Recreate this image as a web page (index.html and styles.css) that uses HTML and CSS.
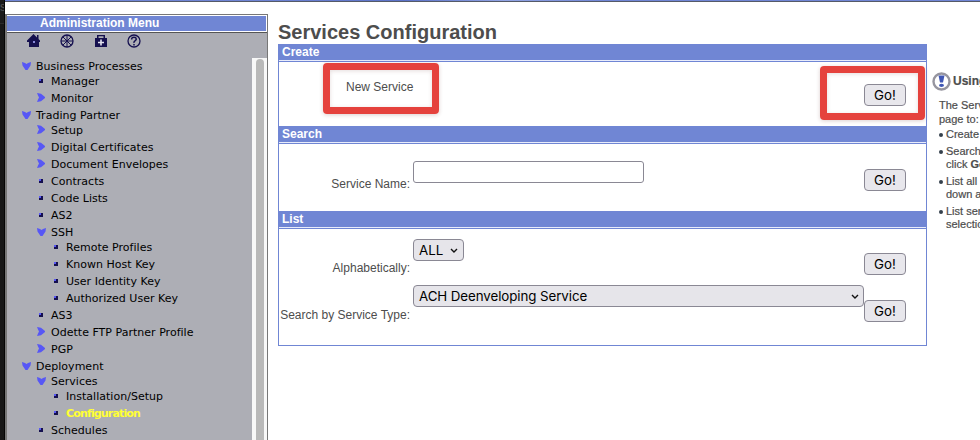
FILE: index.html
```html
<!DOCTYPE html>
<html lang="en">
<head>
<meta charset="utf-8">
<title>Services Configuration</title>
<link rel="stylesheet" href="styles.css">
</head>
<body>
<svg class="defs" width="0" height="0">
  <symbol id="down" viewBox="0 0 9 8"><path d="M0 0L3 1 4.500 2 6 1 9 0 8.500 3.500 5.500 8H3.500L.5 3.500z" fill="#5757f5"/></symbol>
  <symbol id="right" viewBox="0 0 8 9"><path d="M0 0L4 .8 8 4V5L4 8.200 0 9 1 6.500 2 4.500 1 2.500z" fill="#5757f5"/></symbol>
  <symbol id="dot" viewBox="0 0 4 4"><path d="M0 0h4v4H0z" fill="#15104f"/><path d="M0 0h2v2H0z" fill="#5757f5"/></symbol>
  <symbol id="chev" viewBox="0 0 8 5"><path d="M1 1l3 3 3-3" fill="none" stroke="#111" stroke-width="1.4"/></symbol>
</svg>
<div class="edge">s</div>
<div class="page">
  <div class="topbar"></div>
  <div class="content">
    <nav class="sidebar">
      <div class="menu-title">Administration Menu</div>
      <div class="menu-body">
        <div class="tools">
          <svg width="14" height="14" viewBox="0 0 14 14"><path d="M6.500 0L13 6.500V8h-1v5H2V8H0V6.500z" fill="#15104f"/><path d="M10 1h1.500v4H10z" fill="#15104f"/><path d="M6 7h2v2H6z" fill="#8888d8"/></svg>
          <svg width="14" height="14" viewBox="0 0 14 14" fill="none" stroke="#15104f"><circle cx="7" cy="7" r="6" stroke-width="1.3"/><path d="M7 1v12M1 7h12M3 3l8 8M11 3l-8 8"/></svg>
          <svg width="14" height="14" viewBox="0 0 14 14"><path d="M1 4h2V1h8v3h2v9H1zM4.500 2.300V4h5V2.300z" fill="#15104f" fill-rule="evenodd"/><path d="M6.200 5.500h1.600v2.200H10v1.600H7.800v2.200H6.200V9.300H4V7.700h2.200z" fill="#e4e4f0"/></svg>
          <svg width="14" height="14" viewBox="0 0 14 14" fill="none" stroke="#15104f"><circle cx="7" cy="7" r="6" stroke-width="1.3"/><path d="M4.700 5.500V4.700Q5 3.200 7 3.200T9.300 5Q9.300 6 8 6.800T7 9M7 10v1.500" stroke-width="1.500"/></svg>
        </div>
        <div class="tree-wrap">
          <div class="tree">
            <div class="row open"><svg><use href="#down"/></svg>Business Processes</div>
            <div class="row l2 leaf"><svg><use href="#dot"/></svg>Manager</div>
            <div class="row l2 shut"><svg><use href="#right"/></svg>Monitor</div>
            <div class="row open"><svg><use href="#down"/></svg>Trading Partner</div>
            <div class="row l2 shut"><svg><use href="#right"/></svg>Setup</div>
            <div class="row l2 shut"><svg><use href="#right"/></svg>Digital Certificates</div>
            <div class="row l2 shut"><svg><use href="#right"/></svg>Document Envelopes</div>
            <div class="row l2 leaf"><svg><use href="#dot"/></svg>Contracts</div>
            <div class="row l2 leaf"><svg><use href="#dot"/></svg>Code Lists</div>
            <div class="row l2 leaf"><svg><use href="#dot"/></svg>AS2</div>
            <div class="row l2 open"><svg><use href="#down"/></svg>SSH</div>
            <div class="row l3 leaf"><svg><use href="#dot"/></svg>Remote Profiles</div>
            <div class="row l3 leaf"><svg><use href="#dot"/></svg>Known Host Key</div>
            <div class="row l3 leaf"><svg><use href="#dot"/></svg>User Identity Key</div>
            <div class="row l3 leaf"><svg><use href="#dot"/></svg>Authorized User Key</div>
            <div class="row l2 leaf"><svg><use href="#dot"/></svg>AS3</div>
            <div class="row l2 shut"><svg><use href="#right"/></svg>Odette FTP Partner Profile</div>
            <div class="row l2 shut"><svg><use href="#right"/></svg>PGP</div>
            <div class="row open"><svg><use href="#down"/></svg>Deployment</div>
            <div class="row l2 open"><svg><use href="#down"/></svg>Services</div>
            <div class="row l3 leaf"><svg><use href="#dot"/></svg>Installation/Setup</div>
            <div class="row l3 leaf current"><svg><use href="#dot"/></svg>Configuration</div>
            <div class="row l2 leaf"><svg><use href="#dot"/></svg>Schedules</div>
          </div>
          <div class="track"><div class="thumb"></div></div>
        </div>
      </div>
    </nav>
    <main class="main">
      <h1>Services Configuration</h1>
      <div class="panel">
        <h2>Create</h2>
        <div class="section create">
          <div class="mark mark-label">New Service</div>
          <div class="mark mark-go"><button>Go!</button></div>
        </div>
        <h2>Search</h2>
        <div class="section search">
          <label for="name">Service Name:</label>
          <input id="name" type="text">
          <button>Go!</button>
        </div>
        <h2>List</h2>
        <div class="section list">
          <div class="line">
            <span class="label">Alphabetically:</span>
            <div class="select short">ALL<svg width="8" height="5"><use href="#chev"/></svg></div>
            <button>Go!</button>
          </div>
          <div class="line">
            <span class="label">Search by Service Type:</span>
            <div class="select long">ACH Deenveloping Service<svg width="8" height="5"><use href="#chev"/></svg></div>
            <button>Go!</button>
          </div>
        </div>
      </div>
    </main>
    <aside class="help">
      <div class="help-head">
        <svg width="19" height="19" viewBox="0 0 19 19"><circle cx="9.500" cy="9.500" r="8" fill="#fff" stroke="#96959f" stroke-width="2.4"/><path d="M6.500 3.500h6l-1.500 7H8z" fill="#4057b5"/><ellipse cx="9.500" cy="13.300" rx="2.500" ry="1.600" fill="#4057b5"/></svg>
        <b>Using</b>
      </div>
      <p>The Serv<br>page to:</p>
      <ul>
        <li>Create</li>
        <li>Search<br>click <b>Go</b></li>
        <li>List all<br>down a</li>
        <li>List ser<br>selectio</li>
      </ul>
    </aside>
  </div>
</div>
</body>
</html>
```
FILE: styles.css
```css
* { box-sizing: border-box; }
body {
  margin: 0;
  display: flex;
  width: 980px;
  height: 440px;
  overflow: hidden;
  background: #fff;
  font: 12px/14px "Liberation Sans", Arial, sans-serif;
  color: #4d4d4d;
}
.defs { position: absolute; }
.edge {
  width: 5px;
  flex: none;
  background: linear-gradient(#1b1b1b 23px, #2b2b2b 23px, #2b2b2b 24px, #171717 24px);
  border-right: 1px solid #050505;
  color: #555;
  overflow: hidden;
}
.page { flex: 1; min-width: 0; }
.topbar {
  height: 2px;
  background: linear-gradient(90deg, #7086d6 0 40px, #6e84d4 250px, #5b72c8 400px, #91a4e4 500px, #7086d6 600px);
  border-bottom: 1px solid #555a68;
}
.content { display: flex; height: 438px; }

.sidebar {
  width: 263px;
  flex: none;
  margin-top: 12px;
  border: solid #777;
  border-width: 1px 1px 0 2px;
  display: flex;
  flex-direction: column;
}
.menu-title {
  height: 17px;
  flex: none;
  border: solid #fff;
  border-width: 1px 1px 1px 0;
  background: #7086d4;
  padding-left: 33px;
  font-weight: bold;
  font-size: 12px;
  line-height: 14px;
  color: #fff;
}
.menu-body {
  flex: 1;
  min-height: 0;
  border-top: 1px solid #555;
  background: #adaeb5;
}
.tools { display: flex; gap: 19.6px; height: 25px; padding: 1px 0 0 19.5px; }
.tree-wrap { display: flex; height: 383px; }
.tree {
  flex: 1;
  overflow: hidden;
  font: 11px/14px "DejaVu Sans", Verdana, sans-serif;
  letter-spacing: 0.02px;
  color: #000;
  padding: 2px 0 0 15px;
}
.row { display: flex; height: 17px; white-space: nowrap; }
.row.open { height: 15px; }
.row svg { flex: none; width: 9px; height: 8px; margin: 2px 5px 0 0; }
.row.shut svg { width: 8px; height: 9px; margin: 1px 6px 0 0; }
.row.leaf svg { width: 4px; height: 4px; margin: 4px 8px 0 2px; }
.l2 { padding-left: 15px; }
.l3 { padding-left: 30px; }
.row.current { color: #ffff33; font-weight: bold; letter-spacing: -0.84px; }
.track { width: 15px; background: #f8f8f8; padding: 1px 3px 0 4px; }
.thumb { height: 400px; background: #b9b9b9; border-radius: 4px; }

.main { width: 649px; flex: none; margin-left: 10px; padding-top: 20px; }
h1 { margin: 0; height: 22px; font-size: 20px; line-height: 21px; }
.panel { height: 302px; border: 1px solid #7086d4; border-top: 0; }
h2 {
  margin: 0;
  height: 18px;
  border-bottom: 1px solid #7086d4;
  background: linear-gradient(#7086d4 16px, #e8ecfb 16px);
  padding-left: 3px;
  font-size: 12px;
  line-height: 16px;
  color: #fff;
}
.section { display: flex; align-items: flex-start; }
.create { height: 64px; padding-left: 44px; }
.mark {
  border: 7px solid #e5423d;
  border-radius: 4px;
  box-shadow: 0 1px 4px rgba(80, 20, 20, .2), inset 0 1px 4px rgba(80, 20, 20, .15);
}
.mark-label { width: 116px; height: 51px; margin-top: 1px; padding: 10px 0 0 16px; }
.mark-go { width: 105px; height: 54px; margin: 4px 0 0 381px; padding: 11px 0 0 37px; }
button {
  display: block;
  flex: none;
  width: 42px;
  height: 22px;
  margin: 0;
  padding: 0;
  border: 1px solid #8a8894;
  border-radius: 4px;
  background: #e8e7ec;
  font: 13.33px/20px Inter, sans-serif;
  color: #000;
}
.search { height: 67px; }
.search label, .label { width: 131px; flex: none; text-align: right; white-space: nowrap; }
.search label { margin-top: 33px; }
.search input {
  width: 231px;
  height: 22px;
  margin: 17px 220px 0 3px;
  border: 1px solid #8a8894;
  border-radius: 3px;
  background: #fff;
}
.search button { margin-top: 25px; }
.list { flex-direction: column; padding-top: 10px; }
.line { display: flex; height: 46px; width: 100%; }
.label { margin: 22px 3px 0 0; }
.select {
  display: flex;
  align-items: center;
  justify-content: space-between;
  height: 22px;
  padding: 0 5px;
  border: 1px solid #8a8894;
  border-radius: 4px;
  background: #e6e5ea;
  font: 13.33px/20px Inter, sans-serif;
  color: #000;
}
.short { width: 51px; margin-right: 400px; }
.long { width: 451px; padding-right: 4px; letter-spacing: -0.08px; }
.line button { margin-top: 14px; }
.line + .line button { margin-top: 15px; }
.line + .line .label { margin-top: 23px; }

.help { width: 53px; flex: none; padding: 70px 0 0 5px; font-size: 11px; line-height: 13px; white-space: nowrap; overflow: hidden; -webkit-text-stroke: 0.2px #4d4d4d; }
.help-head { display: flex; align-items: center; gap: 2px; height: 19px; font-size: 12px; }
.help-head svg { flex: none; }
.help p { margin: 7px 0 0 7px; line-height: 14px; }
.help ul { list-style: none; margin: 2px 0 0; padding: 0 0 0 14px; }
.help li { margin-bottom: 4px; }
.help li::before { content: ""; float: left; width: 4px; height: 4px; margin: 5px 0 0 -7px; border-radius: 2px; background: #34404c; }
```
